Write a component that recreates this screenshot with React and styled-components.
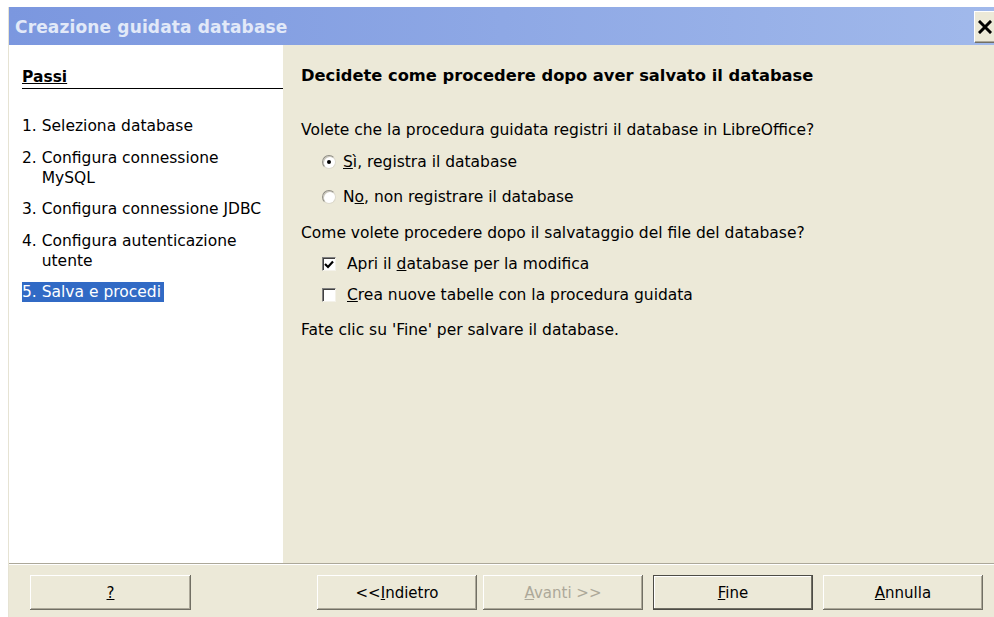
import React from "react";
import styled, { createGlobalStyle } from "styled-components";

const Global = createGlobalStyle`
  html, body { margin: 0; padding: 0; }
  body {
    background: #ffffff;
    overflow: hidden;
    font-family: "DejaVu Sans", Tahoma, sans-serif;
    color: #000;
  }
`;

const Page = styled.div`
  width: 994px;
  height: 617px;
  padding: 7px 0 0 8px;
  box-sizing: border-box;
  overflow: hidden;
`;

const Window = styled.div`
  display: flex;
  flex-direction: column;
  height: 610px;
  width: 986px;
  border-left: 1px solid #e6e3d3;
`;

const TitleBar = styled.div`
  height: 38px;
  display: flex;
  align-items: center;
  justify-content: space-between;
  background: linear-gradient(90deg, #7b97df 0%, #8ea8e5 50%, #a1b9eb 100%);
`;

const TitleText = styled.span`
  font-family: "DejaVu Sans", Tahoma, sans-serif;
  font-weight: bold;
  font-size: 17px;
  color: #e2e9f8;
  padding: 2px 0 0 6px;
  letter-spacing: 0.15px;
`;

const CloseButton = styled.div`
  width: 24px;
  height: 31px;
  margin-right: -3px;
  background: #ece9d8;
  border-top: 1px solid #fff;
  border-left: 1px solid #fff;
  box-shadow: inset -1px -1px 0 #aca899, 1px 1px 0 #716f64;
  display: flex;
  align-items: center;
  padding-left: 3px;
  box-sizing: border-box;
`;

const Body = styled.div`
  display: grid;
  grid-template-columns: 274px 1fr;
  height: 518px;
`;

const StepsPanel = styled.div`
  background: #ffffff;
  padding: 22px 0 0 13px;
`;

const StepsHeader = styled.div`
  font-weight: bold;
  font-size: 15.5px;
  line-height: 20px;
  text-decoration: underline;
  border-bottom: 1px solid #000;
  padding-bottom: 1px;
  margin-bottom: 27px;
`;

const StepList = styled.ul`
  list-style: none;
  margin: 0;
  padding: 0;
  display: flex;
  flex-direction: column;
  gap: 11.5px;
`;

const Step = styled.li`
  font-size: 15.5px;
  line-height: 20px;
  display: flex;
  width: fit-content;
  background: ${(p) => (p.$active ? "#316ac5" : "transparent")};
  color: ${(p) => (p.$active ? "#ffffff" : "#000")};
  padding-right: ${(p) => (p.$active ? "3px" : "0")};
`;

const StepNum = styled.span`
  white-space: pre;
`;

const StepLabel = styled.span`
  display: flex;
  flex-direction: column;
`;

const ContentPanel = styled.div`
  background: #ece9d8;
  padding: 21px 0 0 18px;
  font-size: 15.5px;
`;

const Heading = styled.div`
  font-weight: bold;
  font-size: 16.3px;
  line-height: 20px;
  margin-bottom: 34px;
`;

const Question = styled.div`
  line-height: 20px;
  margin-bottom: ${(p) => p.$gap || 12}px;
`;

const OptionRow = styled.label`
  display: flex;
  align-items: center;
  gap: 7px;
  margin-left: 21px;
  line-height: 20px;
  margin-bottom: ${(p) => p.$gap || 12}px;
`;

const Radio = styled.span`
  width: 14px;
  height: 14px;
  border-radius: 50%;
  box-sizing: border-box;
  background: #fff;
  border: 1px solid #dcd9cc;
  border-top-color: #8f8d84;
  border-left-color: #8f8d84;
  box-shadow: inset 1px 1px 0 #c9c6ba;
  display: flex;
  align-items: center;
  justify-content: center;
  &::after {
    content: "";
    width: 4px;
    height: 4px;
    border-radius: 50%;
    background: ${(p) => (p.$on ? "#000" : "transparent")};
  }
`;

const Box = styled.span`
  width: 14px;
  height: 14px;
  box-sizing: border-box;
  background: #fff;
  border-top: 1px solid #808080;
  border-left: 1px solid #808080;
  border-right: 1px solid #f4f2ea;
  border-bottom: 1px solid #f4f2ea;
  box-shadow: inset 1px 1px 0 #404040;
  display: flex;
  align-items: center;
  justify-content: center;
  margin-right: 4px;
`;

const U = styled.span`
  text-decoration: underline;
`;

const Footer = styled.div`
  flex: 1;
  background: #ece9d8;
  border-top: 1px solid #aca899;
  box-shadow: inset 0 1px 0 #ffffff;
  display: flex;
  align-items: flex-start;
  padding: 11px 0 0 21px;
`;

const Button = styled.button`
  width: ${(p) => p.$w || 160}px;
  height: 35px;
  margin-left: ${(p) => p.$ml || 0}px;
  background: #ece9d8;
  font-family: "DejaVu Sans", Tahoma, sans-serif;
  font-size: 15px;
  color: ${(p) => (p.disabled ? "#aca899" : "#000")};
  border: none;
  box-sizing: border-box;
  padding: 0;
  box-shadow: ${(p) =>
    p.$default
      ? "inset 0 0 0 1px #4d4c46, inset -2px -2px 0 #716f64, inset 2px 2px 0 #fff"
      : "inset -1px -1px 0 #716f64, inset 1px 1px 0 #fff, inset -2px -2px 0 #aca899"};
  cursor: default;
`;

function CheckMark() {
  return (
    <svg width="10" height="9" viewBox="0 0 10 9">
      <path d="M1 4 L4 7 L9 1.5" stroke="#000" strokeWidth="2.2" fill="none" />
    </svg>
  );
}

function CloseIcon() {
  return (
    <svg width="14" height="14" viewBox="0 0 14 14">
      <path d="M2 2 L12 12 M12 2 L2 12" stroke="#000" strokeWidth="3" strokeLinecap="square" />
    </svg>
  );
}

const steps = [
  ["1. ", ["Seleziona database"]],
  ["2. ", ["Configura connessione", "MySQL"]],
  ["3. ", ["Configura connessione JDBC"]],
  ["4. ", ["Configura autenticazione", "utente"]],
  ["5. ", ["Salva e procedi"]],
];

export default function App() {
  return (
    <>
      <Global />
      <Page>
        <Window>
          <TitleBar>
            <TitleText>Creazione guidata database</TitleText>
            <CloseButton>
              <CloseIcon />
            </CloseButton>
          </TitleBar>
          <Body>
            <StepsPanel>
              <StepsHeader>Passi</StepsHeader>
              <StepList>
                {steps.map(([n, lines], i) => (
                  <Step key={n} $active={i === 4}>
                    <StepNum>{n}</StepNum>
                    <StepLabel>
                      {lines.map((l) => (
                        <span key={l}>{l}</span>
                      ))}
                    </StepLabel>
                  </Step>
                ))}
              </StepList>
            </StepsPanel>
            <ContentPanel>
              <Heading>Decidete come procedere dopo aver salvato il database</Heading>
              <Question $gap={12}>
                Volete che la procedura guidata registri il database in LibreOffice?
              </Question>
              <OptionRow $gap={15}>
                <Radio $on />
                <span>
                  <U>S</U>ì, registra il database
                </span>
              </OptionRow>
              <OptionRow $gap={16}>
                <Radio />
                <span>
                  N<U>o</U>, non registrare il database
                </span>
              </OptionRow>
              <Question $gap={11}>
                Come volete procedere dopo il salvataggio del file del database?
              </Question>
              <OptionRow $gap={11}>
                <Box>
                  <CheckMark />
                </Box>
                <span>
                  Apri il <U>d</U>atabase per la modifica
                </span>
              </OptionRow>
              <OptionRow $gap={15}>
                <Box />
                <span>
                  <U>C</U>rea nuove tabelle con la procedura guidata
                </span>
              </OptionRow>
              <Question>Fate clic su 'Fine' per salvare il database.</Question>
            </ContentPanel>
          </Body>
          <Footer>
            <Button $w={161}>
              <U>?</U>
            </Button>
            <Button $ml={126}>
              &lt;&lt;<U>I</U>ndietro
            </Button>
            <Button $ml={6} disabled>
              <U>A</U>vanti &gt;&gt;
            </Button>
            <Button $ml={10} $default>
              <U>F</U>ine
            </Button>
            <Button $ml={10}>
              <U>A</U>nnulla
            </Button>
          </Footer>
        </Window>
      </Page>
    </>
  );
}
